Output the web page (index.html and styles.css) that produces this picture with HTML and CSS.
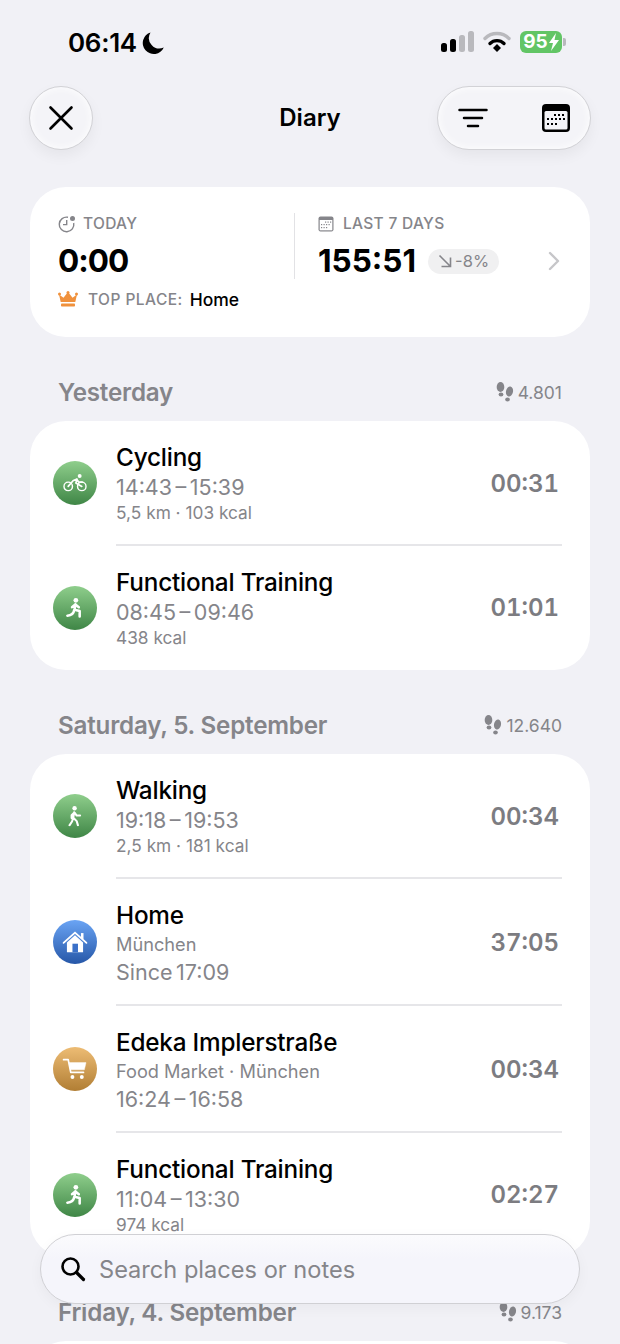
FILE: index.html
```html
<!DOCTYPE html>
<html lang="en">
<head>
  <meta charset="UTF-8" />
  <meta name="viewport" content="width=device-width, initial-scale=1" />
  <title>Diary</title>
  <link rel="stylesheet" href="styles.css">
</head>
<body>

<div class="status">
  <div class="status-left">
    <span class="clock">06:14</span>
    <svg class="moon" width="24" height="24" viewBox="0 0 24 24"><path d="M9.5 1.5A11 11 0 1 0 22.8 16.5 10.5 10.5 0 0 1 9.5 1.5z" fill="#000"/></svg>
  </div>
  <div class="status-right">
    <svg width="34" height="24" viewBox="0 0 34 24">
      <rect x="1" y="13" width="6" height="9" rx="2.5" fill="#000"/>
      <rect x="10" y="9" width="6" height="13" rx="2.5" fill="#000"/>
      <rect x="19" y="5" width="6" height="17" rx="2.5" fill="#b9b9bd"/>
      <rect x="28" y="1" width="6" height="21" rx="2.5" fill="#b9b9bd"/>
    </svg>
    <svg width="28" height="24" viewBox="0 0 28 24" fill="none">
      <path d="M2 8.5a17 17 0 0 1 24 0" stroke="#b9b9bd" stroke-width="3.4" stroke-linecap="round"/>
      <path d="M7 13.5a10 10 0 0 1 14 0" stroke="#000" stroke-width="3.4" stroke-linecap="round"/>
      <path d="M10 18l4-4 4 4-4 4z" fill="#000"/>
    </svg>
    <div class="battery"><span class="battery-fill">95<svg width="10" height="18" viewBox="0 0 10 18"><path d="M7 0L0 10h4l-2 8 8-11H5.5z" fill="#fff"/></svg></span><span class="battery-cap"></span></div>
  </div>
</div>

<div class="toolbar">
  <div class="toolbar-side">
    <button class="glass round">
      <svg width="30" height="30" viewBox="0 0 30 30"><path d="M4.5 4.5l21 21M25.5 4.5l-21 21" stroke="#000" stroke-width="2.6" stroke-linecap="round"/></svg>
    </button>
  </div>
  <div class="title">Diary</div>
  <div class="toolbar-side right">
    <div class="glass pill">
      <svg width="30" height="24" viewBox="0 0 30 24"><path d="M1.5 4h27M6 12h18M10 20h10" stroke="#000" stroke-width="2.5" stroke-linecap="round"/></svg>
      <svg width="30" height="30" viewBox="0 0 30 30">
        <rect x="1" y="1" width="28" height="28" rx="4" fill="#000"/>
        <rect x="3.5" y="8" width="23" height="18.5" rx="1.5" fill="#f4f4f8"/>
        <g fill="#000">
          <rect x="13" y="11" width="2" height="2"/><rect x="17" y="11" width="2" height="2"/><rect x="21" y="11" width="2" height="2"/>
          <rect x="6" y="15" width="2" height="2"/><rect x="10" y="15" width="2" height="2"/><rect x="14" y="15" width="2" height="2"/><rect x="18" y="15" width="2" height="2"/><rect x="22" y="15" width="2" height="2"/>
          <rect x="6" y="20" width="2" height="2"/><rect x="10" y="20" width="2" height="2"/><rect x="14" y="20" width="2" height="2"/>
        </g>
      </svg>
    </div>
  </div>
</div>

<div class="summary card">
  <div class="summary-top">
    <div class="today">
      <div class="label">
        <svg width="18" height="18" viewBox="0 0 18 18" fill="none"><path d="M10 2.3A7.3 7.3 0 1 0 15.7 8" stroke="#85858a" stroke-width="1.4"/><path d="M8.7 5v4.6H5" stroke="#85858a" stroke-width="1.4"/><circle cx="14.5" cy="3.5" r="2.5" fill="#85858a"/></svg>
        TODAY
      </div>
      <div class="big today-value">0:00</div>
    </div>
    <div class="week">
      <div class="label label-week">
        <svg width="16" height="16" viewBox="0 0 16 16"><rect x="0.5" y="0.5" width="15" height="15" rx="2" fill="#85858a"/><rect x="1.7" y="4" width="12.6" height="10.3" fill="#fff"/><g fill="#85858a"><rect x="7" y="5.5" width="1.2" height="1.2"/><rect x="9.5" y="5.5" width="1.2" height="1.2"/><rect x="12" y="5.5" width="1.2" height="1.2"/><rect x="3" y="8" width="1.2" height="1.2"/><rect x="5.5" y="8" width="1.2" height="1.2"/><rect x="8" y="8" width="1.2" height="1.2"/><rect x="10.5" y="8" width="1.2" height="1.2"/><rect x="3" y="11" width="1.2" height="1.2"/><rect x="5.5" y="11" width="1.2" height="1.2"/><rect x="8" y="11" width="1.2" height="1.2"/></g></svg>
        LAST 7 DAYS
      </div>
      <div class="week-row">
        <span class="big">155:51</span>
        <span class="trend">
          <svg width="14" height="14" viewBox="0 0 14 14" fill="none"><path d="M1.5 1.5l10.5 10.5M12.5 3.5v9h-9" stroke="#85858a" stroke-width="1.6"/></svg>
          -8%
        </span>
        <svg class="chevron" width="12" height="20" viewBox="0 0 12 20" fill="none"><path d="M2 2l8 8-8 8" stroke="#c6c6c9" stroke-width="2.4" stroke-linecap="round" stroke-linejoin="round"/></svg>
      </div>
    </div>
  </div>
  <div class="top-place">
    <svg width="20" height="16" viewBox="0 0 20 16"><path d="M1 3.5l4.5 3.2L10 1l4.5 5.7L19 3.5 17.3 11H2.7z" fill="#f0913c"/><circle cx="1.5" cy="3" r="1.5" fill="#f0913c"/><circle cx="10" cy="1.5" r="1.5" fill="#f0913c"/><circle cx="18.5" cy="3" r="1.5" fill="#f0913c"/><rect x="3" y="12.5" width="14" height="3" rx="0.8" fill="#f0913c"/></svg>
    <span class="top-label">TOP PLACE:</span>
    <span class="top-name">Home</span>
  </div>
</div>

<div class="day-head">
  <span class="day-name">Yesterday</span>
  <span class="steps">
    <svg width="18" height="20" viewBox="0 0 18 20"><g fill="#85858a"><ellipse cx="4.5" cy="5" rx="3.8" ry="5"/><ellipse cx="5" cy="12.5" rx="2.4" ry="2"/><ellipse cx="13.5" cy="9.5" rx="3.5" ry="5" transform="rotate(12 13.5 9.5)"/><ellipse cx="11.5" cy="17.5" rx="2.3" ry="2"/></g></svg>
    4.801
  </span>
</div>

<div class="card list">
  <div class="row">
    <div class="badge green">
      <svg width="28" height="22" viewBox="0 0 28 22" fill="none"><circle cx="6" cy="15" r="5" stroke="#fff" stroke-width="1.7"/><circle cx="22" cy="15" r="5" stroke="#fff" stroke-width="1.7"/><circle cx="19.5" cy="2.7" r="2.3" fill="#fff"/><path d="M6 15l6-7 4.5-1.5L15 11l7 4M15.5 6.5l3 3.5h4" stroke="#fff" stroke-width="2" stroke-linejoin="round" stroke-linecap="round"/></svg>
    </div>
    <div class="info">
      <div class="name">Cycling</div>
      <div class="time">14:43 – 15:39</div>
      <div class="meta">5,5 km · 103 kcal</div>
    </div>
    <div class="duration">00:31</div>
  </div>
  <div class="row">
    <div class="badge green">
      <svg width="22" height="24" viewBox="0 0 22 24" fill="none"><circle cx="12" cy="3" r="2.8" fill="#fff"/><path d="M11.5 7.5L10.5 14l6 1.5V22M11.5 8l4 3M11 8L7.5 11M10 14.5c-.5 4-2.5 6-8 6.5" stroke="#fff" stroke-width="3" stroke-linecap="round" stroke-linejoin="round"/></svg>
    </div>
    <div class="info">
      <div class="name">Functional Training</div>
      <div class="time">08:45 – 09:46</div>
      <div class="meta">438 kcal</div>
    </div>
    <div class="duration">01:01</div>
  </div>
</div>

<div class="day-head">
  <span class="day-name">Saturday, 5. September</span>
  <span class="steps">
    <svg width="18" height="20" viewBox="0 0 18 20"><g fill="#85858a"><ellipse cx="4.5" cy="5" rx="3.8" ry="5"/><ellipse cx="5" cy="12.5" rx="2.4" ry="2"/><ellipse cx="13.5" cy="9.5" rx="3.5" ry="5" transform="rotate(12 13.5 9.5)"/><ellipse cx="11.5" cy="17.5" rx="2.3" ry="2"/></g></svg>
    12.640
  </span>
</div>

<div class="card list">
  <div class="row">
    <div class="badge green">
      <svg width="18" height="24" viewBox="0 0 18 24" fill="none"><circle cx="8.5" cy="2.8" r="2.6" fill="#fff"/><path d="M8 7.5L7 14l4 4 1.5 5M7 14l-1.5 4.5L2.5 23M8 8l-3 3v3.5M8.5 8l2.5 3.5h4" stroke="#fff" stroke-width="2.4" stroke-linecap="round" stroke-linejoin="round"/></svg>
    </div>
    <div class="info">
      <div class="name">Walking</div>
      <div class="time">19:18 – 19:53</div>
      <div class="meta">2,5 km · 181 kcal</div>
    </div>
    <div class="duration">00:34</div>
  </div>
  <div class="row tall">
    <div class="badge blue">
      <svg width="30" height="26" viewBox="0 0 30 26"><path d="M1.5 14L15 2l13.5 12" fill="none" stroke="#fff" stroke-width="2.2" stroke-linecap="round"/><rect x="22" y="2.5" width="3" height="7" fill="#fff"/><path d="M5.5 13.5L15 5.2l9.5 8.3V25h-19z" fill="#fff"/><rect x="12" y="15" width="6.5" height="10" fill="#3a70c8"/></svg>
    </div>
    <div class="info">
      <div class="name">Home</div>
      <div class="meta">München</div>
      <div class="time">Since 17:09</div>
    </div>
    <div class="duration">37:05</div>
  </div>
  <div class="row tall">
    <div class="badge amber">
      <svg width="30" height="26" viewBox="0 0 30 26" fill="none"><path d="M1.5 2H7l3 15h15" stroke="#fff" stroke-width="2" stroke-linecap="round" stroke-linejoin="round"/><path d="M8 5.5h20L26 14H9.5z" fill="#fff" stroke="#fff" stroke-width="0.5"/><circle cx="12" cy="22.5" r="2.3" fill="#fff"/><circle cx="23" cy="22.5" r="2.3" fill="#fff"/></svg>
    </div>
    <div class="info">
      <div class="name">Edeka Implerstraße</div>
      <div class="meta">Food Market · München</div>
      <div class="time">16:24 – 16:58</div>
    </div>
    <div class="duration">00:34</div>
  </div>
  <div class="row">
    <div class="badge green">
      <svg width="22" height="24" viewBox="0 0 22 24" fill="none"><circle cx="12" cy="3" r="2.8" fill="#fff"/><path d="M11.5 7.5L10.5 14l6 1.5V22M11.5 8l4 3M11 8L7.5 11M10 14.5c-.5 4-2.500 6-8 6.5" stroke="#fff" stroke-width="3" stroke-linecap="round" stroke-linejoin="round"/></svg>
    </div>
    <div class="info">
      <div class="name">Functional Training</div>
      <div class="time">11:04 – 13:30</div>
      <div class="meta">974 kcal</div>
    </div>
    <div class="duration">02:27</div>
  </div>
</div>

<div class="day-head">
  <span class="day-name">Friday, 4. September</span>
  <span class="steps">
    <svg width="18" height="20" viewBox="0 0 18 20"><g fill="#85858a"><ellipse cx="4.5" cy="5" rx="3.8" ry="5"/><ellipse cx="5" cy="12.5" rx="2.4" ry="2"/><ellipse cx="13.5" cy="9.5" rx="3.5" ry="5" transform="rotate(12 13.5 9.5)"/><ellipse cx="11.5" cy="17.5" rx="2.3" ry="2"/></g></svg>
    9.173
  </span>
</div>

<div class="next-clip">
  <div class="card list next"></div>
</div>

<div class="search">
  <svg width="26" height="26" viewBox="0 0 26 26" fill="none"><circle cx="10.5" cy="10.5" r="8" stroke="#000" stroke-width="2.6"/><path d="M16.5 16.5l7 7" stroke="#000" stroke-width="3.2" stroke-linecap="round"/></svg>
  <span class="search-text">Search places or notes</span>
</div>

</body>
</html>
```

FILE: styles.css
```css
* {
  box-sizing: border-box;
}

html, body {
  height: 1344px;
  overflow: hidden;
}

body {
  font-family: Inter, "Liberation Sans", sans-serif;
  margin: 0;
  padding: 0 30px;
  background-color: #f1f1f6;
  position: relative;
  color: #000;
}

.status {
  height: 85px;
  display: flex;
  justify-content: space-between;
  align-items: flex-start;
  padding: 28px 24px 0 38px;
}

.status-left {
  display: flex;
  align-items: center;
  gap: 4px;
}

.clock {
  font-size: 26px;
  font-weight: 600;
  line-height: 30px;
  letter-spacing: -0.3px;
}

.status-right {
  display: flex;
  align-items: center;
  gap: 9px;
  padding-top: 2px;
}

.battery {
  display: flex;
  align-items: center;
  gap: 1px;
}

.battery-fill {
  width: 42px;
  height: 22px;
  background-color: #62c565;
  border-radius: 6px;
  color: #fff;
  font-size: 19px;
  font-weight: 700;
  line-height: 22px;
  display: flex;
  align-items: center;
  justify-content: center;
  gap: 1px;
}

.battery-cap {
  width: 3px;
  height: 8px;
  background-color: #b9b9bd;
  border-radius: 0 2px 2px 0;
}

.toolbar {
  display: grid;
  grid-template-columns: 1fr auto 1fr;
  align-items: center;
  height: 65px;
  margin: 0 -1px;
}

.toolbar-side {
  display: flex;
}

.toolbar-side.right {
  justify-content: flex-end;
}

.title {
  font-size: 24px;
  font-weight: 600;
  text-align: center;
}

.glass {
  background-color: #f4f4f8;
  border: 1px solid #d2d2d6;
  box-shadow: inset 0 0 8px #fff, 0 6px 14px rgba(0, 0, 0, 0.05);
}

.round {
  width: 64px;
  height: 64px;
  border-radius: 50%;
  padding: 0;
  display: flex;
  align-items: center;
  justify-content: center;
}

.pill {
  width: 154px;
  height: 64px;
  border-radius: 32px;
  display: flex;
  align-items: center;
  justify-content: space-between;
  padding: 0 19px 0 20px;
}

.card {
  background-color: #fff;
  border-radius: 36px;
}

.summary {
  margin-top: 37px;
  height: 150px;
  padding: 27px 30px 0 28px;
}

.summary-top {
  display: flex;
}

.today {
  width: 236px;
}

.week {
  flex: 1;
  border-left: 1px solid #e2e2e5;
  padding-left: 23px;
  height: 66px;
  margin-top: -1px;
}

.label {
  display: flex;
  align-items: center;
  gap: 7px;
  font-size: 15.5px;
  font-weight: 500;
  line-height: 20px;
  color: #85858a;
  letter-spacing: 0.3px;
  height: 20px;
}

.label-week {
  gap: 9px;
  margin-top: 1px;
}

.big {
  font-size: 31.5px;
  font-weight: 700;
  line-height: 40px;
}

.today-value {
  margin-top: 7px;
  letter-spacing: -1px;
}

.week-row {
  display: flex;
  align-items: center;
  margin-top: 7px;
  height: 40px;
}

.trend {
  display: flex;
  align-items: center;
  gap: 3px;
  height: 25px;
  width: 71px;
  border-radius: 13px;
  background-color: #f0f0f1;
  color: #85858a;
  font-size: 16.5px;
  padding-left: 10px;
  margin-left: 12px;
}

.chevron {
  margin-left: auto;
}

.top-place {
  display: flex;
  align-items: center;
  margin-top: 6px;
  height: 24px;
}

.top-label {
  font-size: 15.5px;
  font-weight: 500;
  color: #85858a;
  letter-spacing: 0.45px;
  margin-left: 10px;
}

.top-name {
  font-size: 17.5px;
  font-weight: 500;
  margin-left: 7px;
}

.day-head {
  display: flex;
  justify-content: space-between;
  align-items: center;
  height: 84px;
  padding: 26px 28px 0 28px;
}

.day-name {
  font-size: 24.2px;
  font-weight: 600;
  color: #85858a;
  letter-spacing: -0.2px;
}

.steps {
  display: flex;
  align-items: center;
  gap: 4px;
  font-size: 17.5px;
  color: #85858a;
}

.list {
  padding-left: 23px;
}

.next-clip {
  height: 3px;
  overflow: hidden;
}

.next {
  height: 120px;
}

.row {
  display: flex;
  align-items: center;
  height: 124.5px;
  background: linear-gradient(#e6e6e9, #e6e6e9) no-repeat 63px 100% / calc(100% - 91px) 2px;
}

.row.tall {
  height: 127px;
}

.row:last-child {
  background: none;
}

.row:last-child .info {
  padding-top: 2px;
}

.badge {
  width: 44px;
  height: 44px;
  border-radius: 50%;
  display: flex;
  align-items: center;
  justify-content: center;
  flex: none;
  margin-right: 19px;
}

.badge svg {
  transform: scale(0.85);
}

.green {
  background: linear-gradient(#8fce8c, #3f8646);
}

.blue {
  background: linear-gradient(#6aa4f4, #2657a8);
}

.amber {
  background: linear-gradient(#edbc74, #b17e34);
}

.info {
  flex: 1;
}

.name {
  font-size: 24.3px;
  font-weight: 500;
  line-height: 29px;
  letter-spacing: -0.2px;
}

.time {
  font-size: 21.5px;
  line-height: 30px;
  word-spacing: -2.5px;
  color: #85858a;
}

.meta {
  font-size: 17.3px;
  line-height: 22px;
  color: #85858a;
}

.tall .info {
  padding-top: 3px;
}

.tall .meta {
  font-size: 18.2px;
  margin: 3px 0 2px;
}

.duration {
  font-size: 24px;
  font-weight: 600;
  font-variant-numeric: tabular-nums;
  color: #7c7c81;
  padding-right: 31px;
}

.search {
  position: absolute;
  left: 40px;
  top: 1234px;
  width: 540px;
  height: 70px;
  border-radius: 35px;
  border: 1px solid #d0d0d4;
  background: linear-gradient(#fbfbfd, #f5f5fb 35%);
  box-shadow: 0 4px 14px rgba(0, 0, 0, 0.04);
  display: flex;
  align-items: center;
  padding-left: 19px;
  gap: 13px;
}

.search-text {
  font-size: 23.6px;
  color: #85858a;
}
```
